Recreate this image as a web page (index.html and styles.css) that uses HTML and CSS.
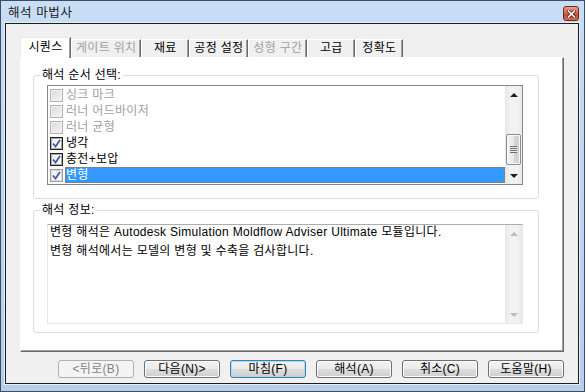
FILE: index.html
```html
<!DOCTYPE html>
<html>
<head>
    <meta charset="utf-8">
    <title>해석 마법사</title>
    <link rel="stylesheet" href="styles.css">
</head>
<body>
    <div class="window">
        <div class="titlebar">
            <span class="title">해석 마법사</span>
            <span class="close">
                <svg width="9" height="8" viewBox="0 0 9 8">
                    <path d="M1.5 1 L7.5 7 M7.5 1 L1.5 7" stroke="#5a1e12" stroke-width="3.2" stroke-linecap="square"/>
                    <path d="M1.5 1 L7.5 7 M7.5 1 L1.5 7" stroke="#ffffff" stroke-width="1.6" stroke-linecap="square"/>
                </svg>
            </span>
        </div>

        <div class="client">
            <!-- tab strip -->
            <div class="tabs">
                <div class="tab active">시퀀스</div>
                <div class="tab disabled">게이트 위치</div>
                <div class="tab">재료</div>
                <div class="tab">공정 설정</div>
                <div class="tab disabled">성형 구간</div>
                <div class="tab">고급</div>
                <div class="tab">정확도</div>
            </div>

            <div class="panel">
                <fieldset class="group group-seq">
                    <legend>해석 순서 선택:</legend>
                    <div class="listbox">
                        <ul class="items">
                            <li class="item disabled"><span class="check"></span><span class="label">싱크 마크</span></li>
                            <li class="item disabled"><span class="check"></span><span class="label">러너 어드바이저</span></li>
                            <li class="item disabled"><span class="check"></span><span class="label">러너 균형</span></li>
                            <li class="item checked"><span class="check"><svg width="11" height="11" viewBox="0 0 11 11"><path d="M2 5.5 L4.5 8.5 L9 2" fill="none" stroke="#4257a0" stroke-width="1.7"/></svg></span><span class="label">냉각</span></li>
                            <li class="item checked"><span class="check"><svg width="11" height="11" viewBox="0 0 11 11"><path d="M2 5.5 L4.5 8.5 L9 2" fill="none" stroke="#4257a0" stroke-width="1.7"/></svg></span><span class="label">충전+보압</span></li>
                            <li class="item checked selected"><span class="check"><svg width="11" height="11" viewBox="0 0 11 11"><path d="M2 5.5 L4.5 8.5 L9 2" fill="none" stroke="#4257a0" stroke-width="1.7"/></svg></span><span class="label">변형</span></li>
                        </ul>
                        <div class="vscroll">
                            <div class="arrow"><span class="tri up"></span></div>
                            <div class="track">
                                <div class="thumb"><span class="grip"></span></div>
                            </div>
                            <div class="arrow"><span class="tri down"></span></div>
                        </div>
                    </div>
                </fieldset>

                <fieldset class="group group-info">
                    <legend>해석 정보:</legend>
                    <div class="textbox">
                        <div class="text">
                            <p>변형 해석은 Autodesk Simulation Moldflow Adviser Ultimate 모듈입니다.</p>
                            <p>변형 해석에서는 모델의 변형 및 수축을 검사합니다.</p>
                        </div>
                        <div class="vscroll off">
                            <div class="arrow"><span class="tri up"></span></div>
                            <div class="track"></div>
                            <div class="arrow"><span class="tri down"></span></div>
                        </div>
                    </div>
                </fieldset>
            </div>

            <div class="buttons">
                <button class="btn disabled">&lt;뒤로(B)</button>
                <button class="btn">다음(N)&gt;</button>
                <button class="btn default">마침(F)</button>
                <button class="btn">해석(A)</button>
                <button class="btn">취소(C)</button>
                <button class="btn">도움말(H)</button>
            </div>
        </div>
    </div>
</body>
</html>
```

FILE: styles.css
```css
* {
    box-sizing: border-box;
}

body {
    margin: 0;
    width: 585px;
    height: 392px;
    overflow: hidden;
    font-family: "Liberation Sans", "Noto Sans CJK KR", sans-serif;
    font-size: 12px;
    letter-spacing: 0.3px;
    color: #000;
}

.window {
    width: 585px;
    height: 392px;
    border: 1px solid #3a4d63;
    background: linear-gradient(to bottom, #c9def5, #bcd4ef 60%, #b6cfeb);
    display: flex;
    flex-direction: column;
    padding: 0 5px 7px 4px;
}

.titlebar {
    height: 22px;
    display: flex;
    align-items: center;
    justify-content: space-between;
}

.title {
    margin-left: 3px;
    margin-top: 2px;
    font-size: 12.5px;
    letter-spacing: 0.6px;
    color: #1a1a1a;
    line-height: 14px;
}

.close {
    width: 16px;
    height: 15px;
    margin-top: 3px;
    border: 1px solid #6b2a1d;
    border-radius: 3px;
    background: linear-gradient(to bottom, #e6a08e, #d0644b 50%, #c24a30 51%, #d26a4c);
    display: flex;
    align-items: center;
    justify-content: center;
}

.client {
    flex: 1;
    background: #f0f0f0;
    border: 1px solid #1c1c1c;
    box-shadow: 0 0 0 1px #e4eef9;
    display: flex;
    flex-direction: column;
    padding: 13px 14px 0 14px;
}

/* tabs */
.tabs {
    display: flex;
    height: 20px;
    position: relative;
    z-index: 1;
}

.tab {
    min-width: 48px;
    padding: 0 4px;
    margin-top: 2px;
    height: 18px;
    line-height: 16px;
    text-align: center;
    white-space: nowrap;
    background: #f0f0f0;
    border-top: 1px solid #ffffff;
    border-left: 1px solid #ffffff;
    border-right: 1px solid #696969;
    box-shadow: inset -1px 0 0 #a0a0a0;
}

.tab.active {
    min-width: 51px;
    margin-top: 0;
    height: 21px;
    line-height: 19px;
    background: #ffffff;
    border-top-color: #e8e8e8;
    border-left-color: #e8e8e8;
}

.tab.disabled {
    color: #a0a0a0;
}

.panel {
    height: 295px;
    background: #ffffff;
    border-top: 1px solid #ffffff;
    border-left: 1px solid #ffffff;
    border-right: 1px solid #696969;
    border-bottom: 1px solid #696969;
    box-shadow: inset -1px -1px 0 #a0a0a0;
    display: flex;
    flex-direction: column;
}

/* group boxes */
.group {
    width: 506px;
    margin: 10px 0 0 12px;
    padding: 0;
    border: 1px solid #d5dfe5;
    border-radius: 3px;
}

.group legend {
    margin-left: 6px;
    padding: 0 2px;
    line-height: 14px;
    color: #000;
}

.group-info {
    margin-top: 4px;
}

.listbox {
    margin: 3px 15px 13px 13px;
    height: 100px;
    border: 1px solid #828790;
    display: flex;
}

.items {
    flex: 1;
    list-style: none;
    margin: 0;
    padding: 1px 0 0 0;
}

.item {
    height: 16px;
    display: flex;
    align-items: center;
}

.check {
    width: 13px;
    height: 13px;
    margin-left: 2px;
    margin-right: 2px;
    display: flex;
    align-items: center;
    justify-content: center;
    border: 1px solid #b1b1b1;
    background: linear-gradient(135deg, #dcdcdc, #f4f4f4);
    box-shadow: inset 0 0 0 1px #f4f4f4;
}

.item.checked .check {
    border-color: #1e1e1e;
    background: linear-gradient(135deg, #e8ecf4, #ffffff);
    box-shadow: inset 0 0 0 1px #b0b0b0;
}

.item.selected .check {
    border-color: #9c9c9c;
    box-shadow: inset 0 0 0 1px #dcdcdc;
}

.label {
    flex: 1;
    height: 16px;
    line-height: 16px;
    padding-left: 1px;
    white-space: nowrap;
}

.item.disabled .label {
    color: #a0a0a0;
}

.item.selected .label {
    background: #3399ff;
    color: #ffffff;
    outline: 1px dotted #c06a2a;
    outline-offset: -1px;
}

/* scroll bars */
.vscroll {
    width: 17px;
    display: flex;
    flex-direction: column;
    background: linear-gradient(to right, #e6e6e6, #f2f2f2 30%, #f2f2f2 70%, #e9e9e9);
}

.arrow {
    height: 17px;
    display: flex;
    align-items: center;
    justify-content: center;
}

.tri {
    width: 0;
    height: 0;
    border-left: 4px solid transparent;
    border-right: 4px solid transparent;
}

.tri.up {
    border-bottom: 4px solid #1e1e1e;
}

.tri.down {
    border-top: 4px solid #1e1e1e;
}

.vscroll.off .tri.up {
    border-bottom-color: #bcbcbc;
}

.vscroll.off .tri.down {
    border-top-color: #bcbcbc;
}

.track {
    flex: 1;
    display: flex;
    flex-direction: column;
    justify-content: flex-end;
    padding: 0 1px 2px 1px;
}

.thumb {
    height: 31px;
    border: 1px solid #8f8f8f;
    border-radius: 2px;
    background: linear-gradient(to right, #f4f4f4, #e8e8e8 50%, #d6d6d6 51%, #cfcfcf);
    box-shadow: inset 0 0 0 1px #fafafa;
    display: flex;
    align-items: center;
    justify-content: center;
}

.grip {
    width: 7px;
    height: 7px;
    background: repeating-linear-gradient(to bottom, #6f6f6f 0, #6f6f6f 1px, #eeeeee 1px, #eeeeee 2px);
}

.textbox {
    margin: 7px 15px 8px 13px;
    height: 100px;
    border: 1px solid #e3e9ef;
    border-top-color: #abadb3;
    display: flex;
}

.text {
    flex: 1;
    padding: 0 0 0 2px;
}

.text p {
    margin: 0 0 4px 0;
    line-height: 15px;
    white-space: nowrap;
}

/* bottom buttons */
.buttons {
    margin-top: 8px;
    display: flex;
    justify-content: flex-end;
    gap: 10px;
}

.btn {
    width: 76px;
    height: 18px;
    padding: 0;
    font: inherit;
    letter-spacing: 0.3px;
    line-height: 14px;
    color: #000;
    border: 1px solid #707070;
    border-radius: 3px;
    background: linear-gradient(to bottom, #f2f2f2, #ebebeb 50%, #dddddd 51%, #cfcfcf);
    box-shadow: inset 0 0 0 1px #fcfcfc;
}

.btn.default {
    border-color: #3c7fb1;
    box-shadow: inset 0 0 0 1px #a6dcf3;
}

.btn.disabled {
    color: #838383;
    border-color: #adb2b5;
    background: #f4f4f4;
    box-shadow: none;
}
```
